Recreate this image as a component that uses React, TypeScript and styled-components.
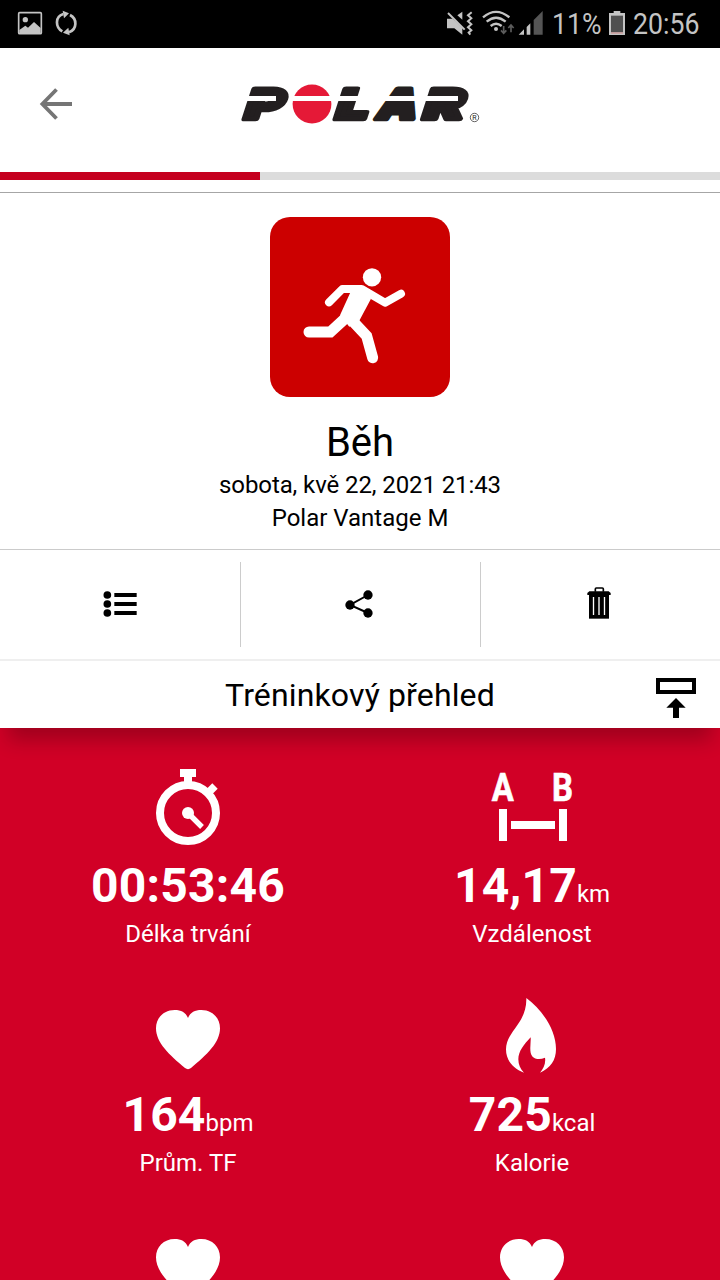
import React from "react";
import styled, { createGlobalStyle } from "styled-components";

const GlobalStyle = createGlobalStyle`
  * { box-sizing: border-box; }
  html, body { margin: 0; padding: 0; background: #fff; }
  body { font-family: Roboto, "Liberation Sans", sans-serif; color: #000; overflow: hidden; }
  svg { display: block; flex: none; }
`;

const Screen = styled.div`
  width: 720px;
  height: 1280px;
  overflow: hidden;
  display: flex;
  flex-direction: column;
  background: #fff;
`;

const StatusBar = styled.div`
  height: 48px;
  flex: none;
  display: flex;
  align-items: center;
  background: #000;
  color: #c4c4c4;
`;

const StatusSpacer = styled.div`
  flex: 1;
`;

const StatusText = styled.div<{ $width: number; $indent?: number }>`
  width: ${(p) => p.$width}px;
  padding-left: ${(p) => p.$indent ?? 0}px;
  font-size: 30px;
  line-height: 48px;
  white-space: nowrap;

  span {
    display: inline-block;
    transform: scaleX(0.89);
    transform-origin: left center;
  }
`;

const AppBar = styled.header`
  height: 124px;
  flex: none;
  display: grid;
  grid-template-columns: 230px 260px 1fr;
  align-items: start;
`;

const BackButton = styled.div`
  padding: 40px 0 0 39px;
`;

const LogoBox = styled.div`
  padding-top: 27px;
`;

const ProgressTrack = styled.div`
  height: 8px;
  flex: none;
  background: #dcdcdc;
`;

const ProgressFill = styled.div`
  width: 260px;
  height: 8px;
  background: #c5001f;
`;

const Summary = styled.section`
  height: 358px;
  flex: none;
  margin-top: 12px;
  padding-top: 24px;
  border-top: 1px solid #a6a6a6;
  border-bottom: 1px solid #cbcbcb;
  display: flex;
  flex-direction: column;
  align-items: center;
`;

const SportTile = styled.div`
  width: 180px;
  height: 180px;
  border-radius: 20px;
  background: #cc0000;
`;

const SportName = styled.h1`
  margin: 22px 0 2px;
  font-size: 40px;
  font-weight: 400;
  line-height: 48px;
`;

const SummaryLine = styled.div<{ $tight?: boolean }>`
  font-size: 24px;
  line-height: 33px;
  letter-spacing: ${(p) => (p.$tight ? "-0.1px" : "0")};
`;

const Actions = styled.nav`
  height: 111px;
  flex: none;
  padding: 12px 0;
  display: grid;
  grid-template-columns: repeat(3, 240px);
  border-bottom: 2px solid #efefef;
`;

const Action = styled.div<{ $divided?: boolean }>`
  height: 85px;
  padding-top: 22px;
  display: flex;
  justify-content: center;
  align-items: flex-start;
  box-shadow: ${(p) => (p.$divided ? "inset 1px 0 #cccccc" : "none")};
`;

const SectionBar = styled.div`
  height: 67px;
  flex: none;
  display: grid;
  grid-template-columns: 64px 1fr 64px;
  position: relative;
  z-index: 1;
  background: #fff;
  box-shadow: 0 20px 20px -8px rgba(0, 0, 0, 0.24);
`;

const SectionTitle = styled.h2`
  grid-column: 2;
  margin: 0;
  font-size: 32px;
  font-weight: 400;
  line-height: 68px;
  letter-spacing: 0.14px;
  text-align: center;
`;

const CollapseButton = styled.div`
  padding-top: 16px;
`;

const Metrics = styled.section`
  flex: 1;
  min-height: 0;
  padding: 32px 16px 0;
  display: grid;
  grid-template-columns: 1fr 1fr;
  grid-auto-rows: 229px;
  align-content: start;
  background: #d10026;
  color: #fff;
`;

const Metric = styled.div`
  display: flex;
  flex-direction: column;
  align-items: center;
`;

const MetricValue = styled.div`
  margin-top: 2px;
  height: 56px;
  font-size: 48px;
  font-weight: 700;
  line-height: 56px;
  letter-spacing: 0.2px;
  white-space: nowrap;

  small {
    font-size: 24px;
    font-weight: 400;
    letter-spacing: 0;
  }
`;

const MetricLabel = styled.div`
  margin-top: 6px;
  font-size: 24px;
  line-height: 28px;
`;

const NotificationIcons = () => (
  <svg width="120" height="48" viewBox="0 0 360 144">
    <rect x="56" y="38" width="68" height="63" rx="3" fill="none" stroke="#c4c4c4" strokeWidth="5" />
    <circle cx="76" cy="59" r="8" fill="#c4c4c4" />
    <path d="M58 90 L76 77 L84 83 L102 66 L122 84 V99 H58 Z" fill="#c4c4c4" />
    <g fill="none" stroke="#c4c4c4" strokeWidth="8">
      <path d="M187 94 C166 82 164 50 190 42" />
      <path d="M210 45 C232 56 232 88 207 97" />
    </g>
    <path d="M188 32 L207 40 L192 55 Z M209 106 L189 98 L205 83 Z" fill="#c4c4c4" />
  </svg>
);

const ConnectivityIcons = () => (
  <svg width="112" height="48" viewBox="0 0 336 144">
    <path d="M21 56 H37 L47 64 L67 84 V104 L43 85 H21 Z M52 46 L67 35 V59 Z" fill="#c4c4c4" />
    <path d="M24 39 L74 89" stroke="#c4c4c4" strokeWidth="6" />
    <path d="M95 37 L84 46 L94 55 L84 64 L94 73 L84 82 L94 91 L86 98 L91 104" fill="none" stroke="#c4c4c4" strokeWidth="6" />
    <g fill="none" stroke="#c4c4c4" strokeWidth="7">
      <path d="M129 52 Q168 19 208 52" />
      <path d="M140 65 Q168 41 197 65" />
      <path d="M152 78 Q168 64 185 78" />
    </g>
    <circle cx="168" cy="87" r="6" fill="#c4c4c4" />
    <path d="M191 78 V98 M183 91 L191 100 L199 91 M213 97 V78 M205 84 L213 75 L221 84" fill="none" stroke="#5c5c5c" strokeWidth="5" />
    <path d="M236 104 L252 88 V104 Z M260 81 L271 70 V104 H260 Z" fill="#c4c4c4" />
    <path d="M281 60 L308 33 V104 H281 Z" fill="#555" />
  </svg>
);

const BatteryIcon = () => (
  <svg width="16" height="48" viewBox="507 0 48 144">
    <path d="M507 39 H521 V33 H541 V39 H555 V105 H507 Z" fill="#c4c4c4" />
    <rect x="513" y="47" width="36" height="50" fill="#505050" />
    <rect x="513" y="97" width="36" height="4" fill="#c99" />
  </svg>
);

const BackIcon = () => (
  <svg width="33" height="32" viewBox="0 0 33 32" fill="none" stroke="#757575" strokeWidth="3.8">
    <path d="M17.5 1.5 L3.4 16 L17.5 30.5 M3.4 16 H33" />
  </svg>
);

const PolarLogo = () => (
  <svg width="260" height="60" viewBox="0 0 260 60">
    <g
      fill="#231f20"
      stroke="#231f20"
      strokeWidth="4.6"
      strokeLinejoin="round"
      fontFamily="Inter"
      fontWeight="900"
      fontSize="41.5"
      textRendering="geometricPrecision"
    >
      <text transform="translate(12 43.8) skewX(-18)" textLength="38" lengthAdjust="spacingAndGlyphs">P</text>
      <text transform="translate(103 43.8) skewX(-18)" textLength="32.5" lengthAdjust="spacingAndGlyphs">L</text>
      <text transform="translate(144.5 43.8) skewX(-18)" textLength="39.5" lengthAdjust="spacingAndGlyphs">A</text>
      <text transform="translate(190.5 43.8) skewX(-18)" textLength="40" lengthAdjust="spacingAndGlyphs">R</text>
    </g>
    <circle cx="82" cy="29" r="19.4" fill="#e51937" />
    <path d="M10 23.5 H46 M60 23.5 H228" stroke="#fff" strokeWidth="4.8" />
    <circle cx="244.5" cy="42.5" r="4.2" fill="none" stroke="#231f20" strokeWidth="0.7" />
    <text x="244.5" y="45" fontSize="7" textAnchor="middle" fill="#231f20">R</text>
  </svg>
);

const RunnerIcon = () => (
  <svg width="180" height="180" viewBox="30 30 540 540" fill="#fff" stroke="#fff" strokeLinecap="round" strokeLinejoin="round">
    <circle cx="336" cy="211" r="27.5" stroke="none" />
    <path d="M207 286 L247 246 H305 L375 287 L423 260" fill="none" strokeWidth="24" />
    <path d="M274 250 L305 236 L333 275 L297 343 L268 359 L240 325 Z" stroke="none" />
    <path d="M147 375 H211 L258 332" fill="none" strokeWidth="33" strokeLinejoin="miter" />
    <path d="M270 334 L320 387 L338 452" fill="none" strokeWidth="33" strokeLinejoin="miter" />
  </svg>
);

const ListIcon = () => (
  <svg width="40" height="41" viewBox="60 102 120 123">
    {[135, 162, 189].map((y) => (
      <g key={y}>
        <circle cx="82" cy={y} r="11.5" />
        <rect x="103" y={y - 6} width="67" height="12" />
      </g>
    ))}
  </svg>
);

const ShareIcon = () => (
  <svg width="40" height="41" viewBox="780 102 120 123">
    <path d="M864 135 L810 165 L864 189" fill="none" stroke="#000" strokeWidth="6" />
    <circle cx="864" cy="135" r="14" />
    <circle cx="810" cy="165" r="14" />
    <circle cx="864" cy="189" r="14" />
  </svg>
);

const TrashIcon = () => (
  <svg width="40" height="41" viewBox="30 42 120 123">
    <path d="M76 65 V57 Q76 54 79 54 H97 Q100 54 100 57 V65" fill="none" stroke="#000" strokeWidth="5" />
    <path d="M52 75 V69 L58 64 H116 L122 69 V75 Z" />
    <rect x="57" y="74" width="60" height="72" />
    <path d="M70.5 81 V135 M87 81 V135 M103.5 81 V135" stroke="#fff" strokeWidth="4" />
  </svg>
);

const CollapseIcon = () => (
  <svg width="40" height="42" viewBox="258 321 120 126">
    <rect x="264" y="330" width="108" height="36" fill="none" stroke="#000" strokeWidth="12" />
    <path d="M318 384 L347 413 H327 V444 H309 V413 H289 Z" />
  </svg>
);

const StopwatchIcon = () => (
  <svg width="96" height="96" viewBox="180 0 288 288" fill="#fff">
    <circle cx="324" cy="159" r="84" fill="none" stroke="#fff" strokeWidth="24" />
    <path d="M300 27 H348 V51 H336 V70 H312 V51 H300 Z" />
    <path d="M324 159 L366 201" stroke="#fff" strokeWidth="16" />
    <circle cx="324" cy="159" r="18" />
    <path d="M384 99 L405 78" stroke="#fff" strokeWidth="23" />
  </svg>
);

const DistanceIcon = () => (
  <svg width="96" height="96" viewBox="132 0 288 288" fill="#fff">
    <g fontSize="117" fontWeight="700" stroke="#fff" strokeWidth="2">
      <text x="155" y="122" textLength="66" lengthAdjust="spacingAndGlyphs">A</text>
      <text x="336" y="122" textLength="63" lengthAdjust="spacingAndGlyphs">B</text>
    </g>
    <path d="M177 147 H201 V243 H177 Z M213 183 H345 V207 H213 Z M357 147 H381 V243 H357 Z" />
  </svg>
);

const HeartIcon = () => (
  <svg width="96" height="96" viewBox="180 -3 288 288" fill="#fff">
    <path d="M324 84 C331 67 345 60 364 60 C397 60 420 84 420 115 C420 158 380 195 333 234 Q324 241 315 234 C268 195 228 158 228 115 C228 84 251 60 284 60 C303 60 317 67 324 84 Z" />
  </svg>
);

const FlameIcon = () => (
  <svg width="96" height="96" viewBox="132 -3 288 288" fill="#fff">
    <path d="M259 24 C306 59 348 119 348 177 C348 211 332 234 300 248 C310 235 318 221 315 203 C296 212 276 207 272 188 C269 172 273 157 272 142 C252 163 235 184 235 208 C235 224 241 237 252 248 C219 235 198 212 198 178 C198 124 261 101 259 24 Z" />
  </svg>
);

const metrics = [
  { icon: <StopwatchIcon />, value: "00:53:46", unit: "", label: "Délka trvání" },
  { icon: <DistanceIcon />, value: "14,17", unit: "km", label: "Vzdálenost" },
  { icon: <HeartIcon />, value: "164", unit: "bpm", label: "Prům. TF" },
  { icon: <FlameIcon />, value: "725", unit: "kcal", label: "Kalorie" },
  { icon: <HeartIcon />, value: "", unit: "", label: "" },
  { icon: <HeartIcon />, value: "", unit: "", label: "" },
];

export default function App() {
  return (
    <>
      <GlobalStyle />
      <Screen>
        <StatusBar>
          <NotificationIcons />
          <StatusSpacer />
          <ConnectivityIcons />
          <StatusText $width={57}><span>11%</span></StatusText>
          <BatteryIcon />
          <StatusText $width={95} $indent={8}><span>20:56</span></StatusText>
        </StatusBar>
        <AppBar>
          <BackButton><BackIcon /></BackButton>
          <LogoBox><PolarLogo /></LogoBox>
        </AppBar>
        <ProgressTrack><ProgressFill /></ProgressTrack>
        <Summary>
          <SportTile><RunnerIcon /></SportTile>
          <SportName>Běh</SportName>
          <SummaryLine $tight>sobota, kvě 22, 2021 21:43</SummaryLine>
          <SummaryLine>Polar Vantage M</SummaryLine>
        </Summary>
        <Actions>
          <Action><ListIcon /></Action>
          <Action $divided><ShareIcon /></Action>
          <Action $divided><TrashIcon /></Action>
        </Actions>
        <SectionBar>
          <SectionTitle>Tréninkový přehled</SectionTitle>
          <CollapseButton><CollapseIcon /></CollapseButton>
        </SectionBar>
        <Metrics>
          {metrics.map((m, i) => (
            <Metric key={i}>
              {m.icon}
              <MetricValue>{m.value}<small>{m.unit}</small></MetricValue>
              <MetricLabel>{m.label}</MetricLabel>
            </Metric>
          ))}
        </Metrics>
      </Screen>
    </>
  );
}
